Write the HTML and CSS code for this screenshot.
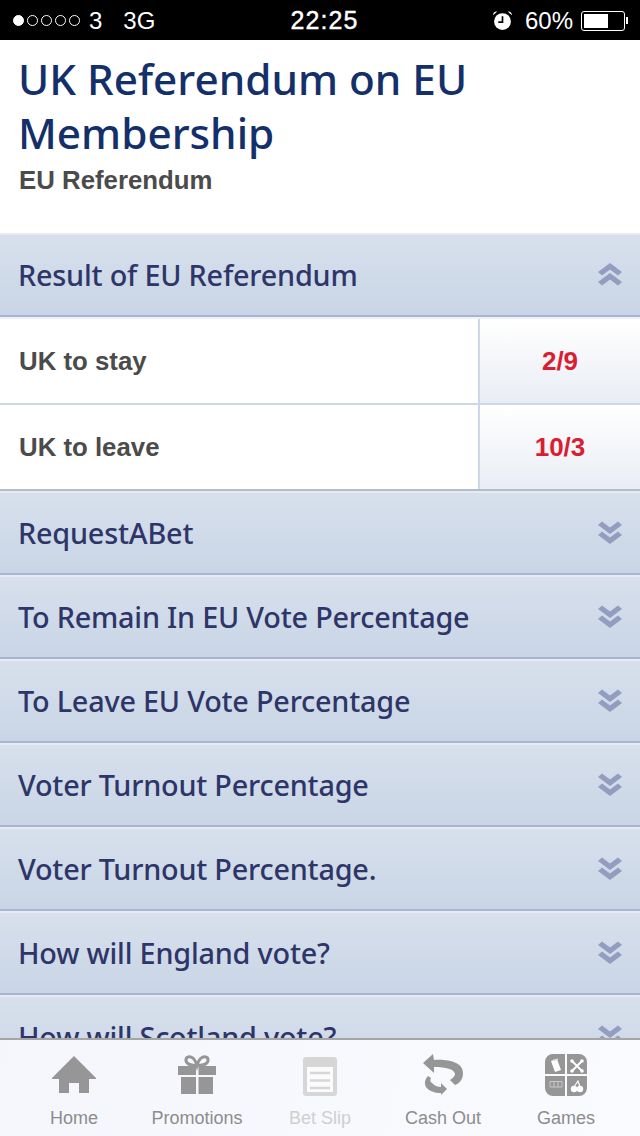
FILE: index.html
```html
<!DOCTYPE html>
<html lang="en">
<head>
<meta charset="utf-8">
<title>UK Referendum on EU Membership</title>
<link rel="stylesheet" href="styles.css">
</head>
<body>
<svg class="defs" width="0" height="0" aria-hidden="true">
  <symbol id="down" viewBox="0 0 24 23"><path d="M0 4 4 .5 12 6.500 20 .5 24 4 12 13ZM0 14 4 10.500 12 16.500 20 10.500 24 14 12 23Z"/></symbol>
  <symbol id="up" viewBox="0 0 24 23"><path d="M0 9 12 0 24 9 20 12.500 12 6.500 4 12.500ZM0 19 12 10 24 19 20 22.500 12 16.500 4 22.500Z"/></symbol>
</svg>
<div class="status">
  <div class="status-left">
    <span class="signal"><i class="dot on"></i><i class="dot"></i><i class="dot"></i><i class="dot"></i><i class="dot"></i></span>
    <span class="carrier">3</span>
    <span class="net">3G</span>
  </div>
  <div class="clock">22:25</div>
  <div class="status-right">
    <svg class="alarm" viewBox="0 0 20 20"><path d="M1 5 5 1.500C3 .8 1 2.500 1 5ZM19 5 15 1.500C17 .8 19 2.500 19 5Z" fill="#fff"/><circle cx="10" cy="11" r="8" fill="#fff"/><path d="M10 6V11.500H6" fill="none" stroke="#000" stroke-width="1.600"/></svg>
    <span class="pct">60%</span>
    <span class="battery"><span class="battery-fill"></span></span><span class="battery-tip"></span>
  </div>
</div>
<main class="content">
  <header class="head">
    <h1>UK Referendum on EU Membership</h1>
    <p>EU Referendum</p>
  </header>
  <div class="section"><span>Result of EU Referendum</span><svg class="chev"><use href="#up"/></svg></div>
  <div class="bets">
    <div class="bet"><div class="bet-name">UK to stay</div><div class="odds">2/9</div></div>
    <div class="bet last"><div class="bet-name">UK to leave</div><div class="odds">10/3</div></div>
  </div>
  <div class="section"><span>RequestABet</span><svg class="chev"><use href="#down"/></svg></div>
  <div class="section"><span>To Remain In EU Vote Percentage</span><svg class="chev"><use href="#down"/></svg></div>
  <div class="section"><span>To Leave EU Vote Percentage</span><svg class="chev"><use href="#down"/></svg></div>
  <div class="section"><span>Voter Turnout Percentage</span><svg class="chev"><use href="#down"/></svg></div>
  <div class="section"><span>Voter Turnout Percentage.</span><svg class="chev"><use href="#down"/></svg></div>
  <div class="section"><span>How will England vote?</span><svg class="chev"><use href="#down"/></svg></div>
  <div class="section"><span>How will Scotland vote?</span><svg class="chev"><use href="#down"/></svg></div>
</main>
<nav class="tabs">
  <div class="tab">
    <svg class="ico" viewBox="0 0 50 50"><path d="M25 6 47 28V29H40V43H30V33H20V43H10V29H3V28Z" fill="#969696"/></svg>
    <span>Home</span>
  </div>
  <div class="tab">
    <svg class="ico" viewBox="0 0 50 50"><path d="M6 16H24V25H6ZM26.500 16H44V25H26.500ZM9 27H24V44H9ZM26.500 27H41V44H26.500Z" fill="#969696"/><path d="M25 15.500C20 15.500 15 14.500 14 11 13.500 7 17 6 20 7.500 23 9 24 12 25 15.500 26 12 27 9 30 7.500 33 6 36.500 7 36 11 35 14.500 30 15.500 25 15.500Z" fill="none" stroke="#969696" stroke-width="3"/></svg>
    <span>Promotions</span>
  </div>
  <div class="tab off">
    <svg class="ico" viewBox="0 0 50 50"><path d="M11 7H39A3 3 0 0 1 42 10V43A3 3 0 0 1 39 46H11A3 3 0 0 1 8 43V10A3 3 0 0 1 11 7Z" fill="#d6d6d6"/><path d="M12 17H38V42H12Z" fill="#fbfbfd"/><path d="M15 23H35M15 30.500H35M15 38H35" stroke="#d6d6d6" stroke-width="2.500"/></svg>
    <span>Bet Slip</span>
  </div>
  <div class="tab">
    <svg class="ico" viewBox="0 0 50 50"><path d="M5 13 15 4 16 10C32 9 45 13 45 23 45 29 42 33 37 35L32 30C35 28 37 26 37 24 36 19 28 17 16 17L16 23Z" fill="#969696"/><path d="M10 26 13 28C12 30 12 32 14 33 17 36 20 37 23 37L23 33 29 39 23 45 23 43C17 43 11 41 8 37 6 33 7 29 10 26Z" fill="#969696"/></svg>
    <span>Cash Out</span>
  </div>
  <div class="tab">
    <svg class="ico" viewBox="0 0 50 50"><path d="M12 4H24V24H4V12A8 8 0 0 1 12 4ZM26 4H38A8 8 0 0 1 46 12V24H26ZM4 26H24V46H12A8 8 0 0 1 4 38ZM26 26H46V38A8 8 0 0 1 38 46H26Z" fill="#969696"/><path d="M10 11 16 9 20 20 14 22Z" fill="#fff"/><path d="M12 9.500 17 8.500V10L13 11Z" fill="#dcdcdc"/><path d="M31 11 41 21M41 11 31 21" stroke="#fff" stroke-width="2"/><circle cx="31" cy="11" r="1.800" fill="#fff"/><circle cx="41" cy="11" r="1.800" fill="#fff"/><circle cx="31" cy="21" r="1.800" fill="#fff"/><circle cx="41" cy="21" r="1.800" fill="#fff"/><path d="M9 31.500H21V37H9ZM13 31.500V37M17 31.500V37" fill="none" stroke="#c8c8c8" stroke-width="1"/><circle cx="33" cy="39" r="3.200" fill="#fff"/><circle cx="39" cy="39" r="3.200" fill="#fff"/><path d="M33 37 37 31 39 37" fill="none" stroke="#fff" stroke-width="1.200"/></svg>
    <span>Games</span>
  </div>
</nav>
</body>
</html>
```
FILE: styles.css
```css
* { box-sizing: border-box; }
html, body { margin: 0; padding: 0; }
body {
  width: 640px;
  height: 1136px;
  display: flex;
  flex-direction: column;
  overflow: hidden;
  background: #fff;
  font-family: "Liberation Sans", Arial, sans-serif;
}
.defs { position: absolute; }
.status {
  height: 40px;
  flex: none;
  background: #000;
  color: #fff;
  display: grid;
  grid-template-columns: 1fr auto 1fr;
  align-items: center;
  font-size: 24px;
  padding: 1px 12px 0 13px;
}
.status-left { display: flex; align-items: center; }
.signal { display: flex; gap: 3px; }
.dot {
  width: 11px;
  height: 11px;
  border-radius: 50%;
  border: 1px solid #fff;
}
.dot.on { background: #fff; }
.carrier { margin-left: 9px; }
.net { margin-left: 21px; }
.clock { margin-left: 8px; font-size: 25px; letter-spacing: 1.1px; -webkit-text-stroke: .4px #fff; }
.status-right { display: flex; align-items: center; justify-content: flex-end; }
.alarm { width: 21px; height: 21px; margin-right: 12px; }
.pct { margin-right: 8px; }
.battery {
  width: 44px;
  height: 20px;
  border: 1px solid #fff;
  border-radius: 3px;
  padding: 2px;
  display: flex;
}
.battery-fill { width: 24px; background: #fff; }
.battery-tip { width: 2px; height: 7px; background: #fff; margin-left: 1px; }
.content { flex: 1; min-height: 0; overflow: hidden; }
.head { height: 193px; padding: 12px 18px 0; }
.head h1 {
  margin: 0;
  font-family: "Noto Sans", sans-serif;
  font-weight: 500;
  font-size: 42.300px;
  line-height: 54px;
  color: #14306b;
}
.head p {
  margin: 1px 0 0 1px;
  font-size: 25.800px;
  line-height: 38px;
  font-weight: 700;
  color: #4b4b4b;
}
.section {
  height: 84px;
  display: flex;
  align-items: center;
  justify-content: space-between;
  padding: 0 18px 2px;
  border-top: 2px solid #e6ebf2;
  border-bottom: 2px solid #a9b4ce;
  background: linear-gradient(#d7e0ec, #c9d5e6);
  color: #2e3568;
  font-family: "Noto Sans", sans-serif;
  font-weight: 500;
  font-size: 28.800px;
  letter-spacing: -.2px;
}
.chev { width: 24px; height: 23px; fill: #929dbf; flex: none; }
.bets { border-top: 2px solid #eef1f7; }
.bet {
  height: 86px;
  display: flex;
  border-bottom: 2px solid #ccd7e8;
}
.bet.last { border-bottom-color: #b4bbc9; }
.bet-name {
  flex: 1;
  padding: 0 19px;
  display: flex;
  align-items: center;
  font-size: 25.800px;
  font-weight: 700;
  color: #4b4b4b;
}
.odds {
  width: 162px;
  border-left: 2px solid #ccd7e8;
  background: linear-gradient(#fff, #e9edf4);
  display: flex;
  align-items: center;
  justify-content: center;
  color: #dc1c30;
  font-size: 26px;
  font-weight: 700;
}
.tabs {
  flex: none;
  height: 98px;
  border-top: 2px solid #a5a5a5;
  background: linear-gradient(100deg, #f4f6fc, #fafbfe);
  display: grid;
  grid-template-columns: 148px 98px 148px 98px 148px;
}
.tab {
  display: flex;
  flex-direction: column;
  align-items: center;
  color: #8c8c8c;
  font-size: 18px;
  padding-top: 10px;
}
.tab span { margin-top: 8px; }
.ico { height: 50px; width: 50px; flex: none; }
.off { color: #cfcfcf; }
```
